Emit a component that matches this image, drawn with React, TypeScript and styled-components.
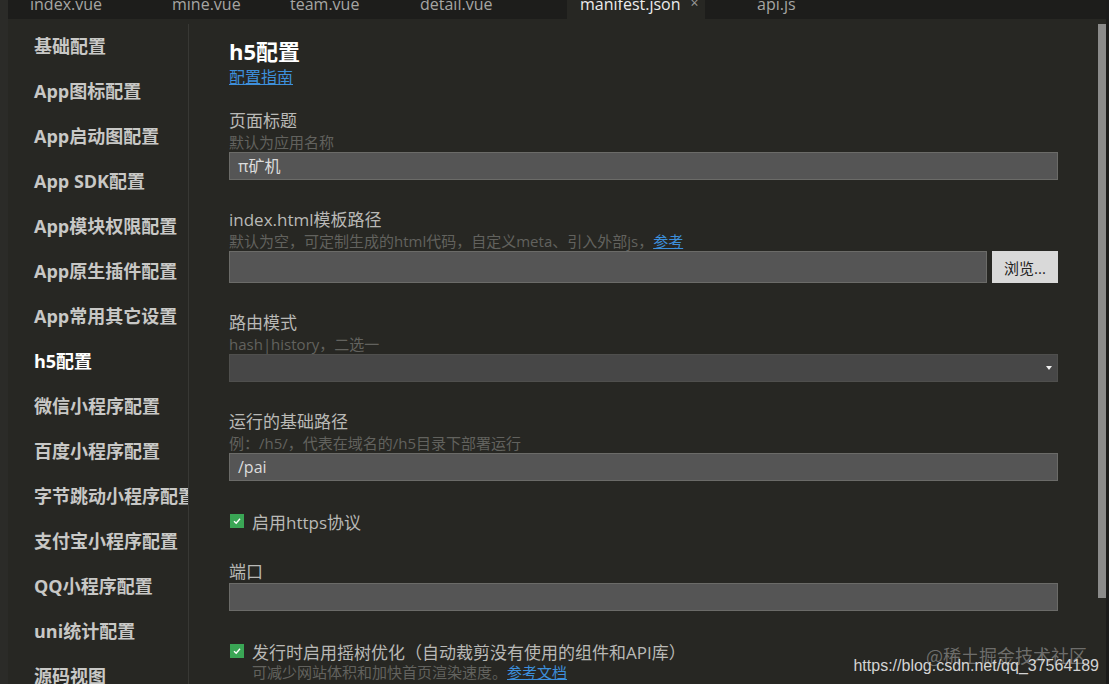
import React from 'react';
import styled, { createGlobalStyle } from 'styled-components';

// #region Global
const GlobalStyle = createGlobalStyle`
  html, body {
    margin: 0;
    padding: 0;
    height: 684px;
    overflow: hidden;
    background: #272723;
  }
  * {
    box-sizing: border-box;
  }
`;

const FONT = `"Open Sans", "Noto Sans CJK SC", sans-serif`;
// #endregion

// #region Styled
const StyledWindow = styled.div`
  position: relative;
  display: flex;
  width: 1109px;
  height: 684px;
  font-family: ${FONT};
  background: #272723;
  overflow: hidden;
`;

const StyledLeftStrip = styled.div`
  width: 8px;
  flex-shrink: 0;
  background: #2b2b28;
`;

const StyledRightStrip = styled.div`
  width: 3px;
  flex-shrink: 0;
  background: #1b1b1a;
`;

const StyledMain = styled.div`
  flex: 1;
  display: flex;
  flex-direction: column;
  min-width: 0;
`;

const StyledTabBar = styled.div`
  display: flex;
  height: 19px;
  flex-shrink: 0;
  background: #1d1d1b;
  overflow: hidden;
`;

const StyledTab = styled.div<{ $width: number; $pad: number; $active?: boolean }>`
  display: flex;
  align-items: flex-start;
  width: ${(p) => p.$width}px;
  padding-left: ${(p) => p.$pad}px;
  flex-shrink: 0;
  background: ${(p) => (p.$active ? '#272723' : 'transparent')};
  color: ${(p) => (p.$active ? '#ececec' : '#a6a6a3')};
  font-size: 16px;
  line-height: 16px;
`;

const StyledTabText = styled.span`
  margin-top: -4px;
  white-space: nowrap;
`;

const StyledTabClose = styled.span`
  margin-top: -5px;
  margin-left: 10px;
  font-size: 14px;
  color: #9a9a9a;
`;

const StyledBody = styled.div`
  flex: 1;
  display: flex;
  min-height: 0;
`;

const StyledSidebar = styled.div`
  width: 181px;
  flex-shrink: 0;
  padding-left: 26px;
  border-right: 1px solid #383834;
  margin-top: 5px;
  overflow: hidden;
`;

const StyledSidebarItem = styled.div<{ $active?: boolean }>`
  height: 45px;
  line-height: 45px;
  font-size: 18px;
  font-weight: 700;
  white-space: nowrap;
  color: ${(p) => (p.$active ? '#ffffff' : '#c8c8c6')};
`;

const StyledContent = styled.div`
  flex: 1;
  min-width: 0;
  padding: 18px 40px 0 40px;
  overflow: hidden;
`;

const StyledTitle = styled.div`
  font-size: 22px;
  line-height: 28px;
  font-weight: 700;
  color: #ffffff;
`;

const StyledLink = styled.a`
  color: #3d8fdb;
  text-decoration: underline;
  cursor: pointer;
`;

const StyledGuideLink = styled(StyledLink)`
  display: inline-block;
  margin-top: 2px;
  font-size: 16px;
  line-height: 20px;
`;

const StyledForm = styled.div`
  margin-top: 22px;
`;

const StyledField = styled.div`
  margin-bottom: 29px;
`;

const StyledLabel = styled.div`
  font-size: 17px;
  line-height: 22px;
  color: #b9b9b6;
  white-space: nowrap;
`;

const StyledHint = styled.div<{ $indent?: boolean }>`
  font-size: 15px;
  line-height: 20px;
  color: #62625e;
  white-space: nowrap;
  padding-left: ${(p) => (p.$indent ? '23px' : '0')};
`;

const StyledInput = styled.div<{ $height?: number }>`
  height: ${(p) => p.$height ?? 28}px;
  flex: 1;
  background: #555555;
  border: 1px solid #6b6b68;
  padding-left: 8px;
  font-size: 16px;
  line-height: ${(p) => (p.$height ?? 28) - 2}px;
  color: #dcdcdc;
`;

const StyledInputRow = styled.div`
  display: flex;
  gap: 5px;
`;

const StyledBrowseButton = styled.button`
  width: 66px;
  height: 32px;
  border: none;
  background: #d9d9d9;
  color: #222;
  font-family: ${FONT};
  font-size: 15px;
  padding: 0;
`;

const StyledSelect = styled.div`
  position: relative;
  height: 28px;
  background: #474747;
  border: 1px solid #4f4f4d;
`;

const StyledSelectArrow = styled.span`
  position: absolute;
  right: 5px;
  top: 11px;
  width: 0;
  height: 0;
  border-left: 3.5px solid transparent;
  border-right: 3.5px solid transparent;
  border-top: 4px solid #f0f0f0;
`;

const StyledCheckRow = styled.div`
  display: flex;
  align-items: center;
  gap: 8px;
  height: 22px;
  padding-left: 1px;
  font-size: 17px;
  color: #b9b9b6;
  white-space: nowrap;
`;

const StyledCheckRowField = styled.div`
  margin-bottom: 29px;
`;

const StyledCheckbox = styled.span`
  display: inline-flex;
  align-items: center;
  justify-content: center;
  width: 14px;
  height: 14px;
  background: #3aa655;
  flex-shrink: 0;
`;

const StyledScrollTrack = styled.div`
  width: 8px;
  flex-shrink: 0;
  padding-top: 5px;
`;

const StyledScrollThumb = styled.div`
  height: 574px;
  background: #8b8b8a;
`;

const StyledWatermark = styled.div`
  position: absolute;
  right: 10px;
  bottom: 8px;
  display: flex;
  flex-direction: column;
  align-items: flex-end;
  pointer-events: none;
`;

const StyledWatermarkJuejin = styled.div`
  font-family: "Noto Sans CJK SC", sans-serif;
  font-size: 18px;
  line-height: 20px;
  color: rgba(200, 200, 200, 0.45);
  margin-right: 12px;
  margin-bottom: -9px;
`;

const StyledWatermarkCsdn = styled.div`
  font-family: "Liberation Sans", sans-serif;
  font-size: 16px;
  line-height: 20px;
  color: #d4d4d4;
`;
// #endregion

const tabs = [
  { name: 'index.vue', width: 142, pad: 22 },
  { name: 'mine.vue', width: 118, pad: 22 },
  { name: 'team.vue', width: 130, pad: 22 },
  { name: 'detail.vue', width: 169, pad: 22 },
  { name: 'manifest.json', width: 138, pad: 13, active: true },
  { name: 'api.js', width: 120, pad: 52 },
];

const menu = [
  '基础配置',
  'App图标配置',
  'App启动图配置',
  'App SDK配置',
  'App模块权限配置',
  'App原生插件配置',
  'App常用其它设置',
  'h5配置',
  '微信小程序配置',
  '百度小程序配置',
  '字节跳动小程序配置',
  '支付宝小程序配置',
  'QQ小程序配置',
  'uni统计配置',
  '源码视图',
];

const Check = () => (
  <StyledCheckbox>
    <svg width="10" height="10" viewBox="0 0 10 10">
      <path d="M2 5.2 L4.2 7.2 L8 2.8" stroke="#fff" strokeWidth="1.4" fill="none" />
    </svg>
  </StyledCheckbox>
);

export default function App() {
  return (
    <StyledWindow>
      <GlobalStyle />
      <StyledLeftStrip />
      <StyledMain>
        <StyledTabBar>
          {tabs.map((t) => (
            <StyledTab key={t.name} $width={t.width} $pad={t.pad} $active={t.active}>
              <StyledTabText>{t.name}</StyledTabText>
              {t.active && <StyledTabClose>×</StyledTabClose>}
            </StyledTab>
          ))}
        </StyledTabBar>
        <StyledBody>
          <StyledSidebar>
            {menu.map((m) => (
              <StyledSidebarItem key={m} $active={m === 'h5配置'}>
                {m}
              </StyledSidebarItem>
            ))}
          </StyledSidebar>
          <StyledContent>
            <StyledTitle>h5配置</StyledTitle>
            <StyledGuideLink>配置指南</StyledGuideLink>
            <StyledForm>
              <StyledField>
                <StyledLabel>页面标题</StyledLabel>
                <StyledHint>默认为应用名称</StyledHint>
                <StyledInput>π矿机</StyledInput>
              </StyledField>
              <StyledField>
                <StyledLabel>index.html模板路径</StyledLabel>
                <StyledHint>
                  默认为空，可定制生成的html代码，自定义meta、引入外部js，<StyledLink>参考</StyledLink>
                </StyledHint>
                <StyledInputRow>
                  <StyledInput $height={32} />
                  <StyledBrowseButton>浏览...</StyledBrowseButton>
                </StyledInputRow>
              </StyledField>
              <StyledField>
                <StyledLabel>路由模式</StyledLabel>
                <StyledHint>hash|history，二选一</StyledHint>
                <StyledSelect>
                  <StyledSelectArrow />
                </StyledSelect>
              </StyledField>
              <StyledField>
                <StyledLabel>运行的基础路径</StyledLabel>
                <StyledHint>例：/h5/，代表在域名的/h5目录下部署运行</StyledHint>
                <StyledInput>/pai</StyledInput>
              </StyledField>
              <StyledCheckRowField>
                <StyledCheckRow>
                  <Check />
                  启用https协议
                </StyledCheckRow>
              </StyledCheckRowField>
              <StyledField>
                <StyledLabel>端口</StyledLabel>
                <StyledInput />
              </StyledField>
              <div>
                <StyledCheckRow>
                  <Check />
                  发行时启用摇树优化（自动裁剪没有使用的组件和API库）
                </StyledCheckRow>
                <StyledHint $indent>
                  可减少网站体积和加快首页渲染速度。<StyledLink>参考文档</StyledLink>
                </StyledHint>
              </div>
            </StyledForm>
          </StyledContent>
          <StyledScrollTrack>
            <StyledScrollThumb />
          </StyledScrollTrack>
        </StyledBody>
      </StyledMain>
      <StyledRightStrip />
      <StyledWatermark>
        <StyledWatermarkJuejin>@稀土掘金技术社区</StyledWatermarkJuejin>
        <StyledWatermarkCsdn>https://blog.csdn.net/qq_37564189</StyledWatermarkCsdn>
      </StyledWatermark>
    </StyledWindow>
  );
}
